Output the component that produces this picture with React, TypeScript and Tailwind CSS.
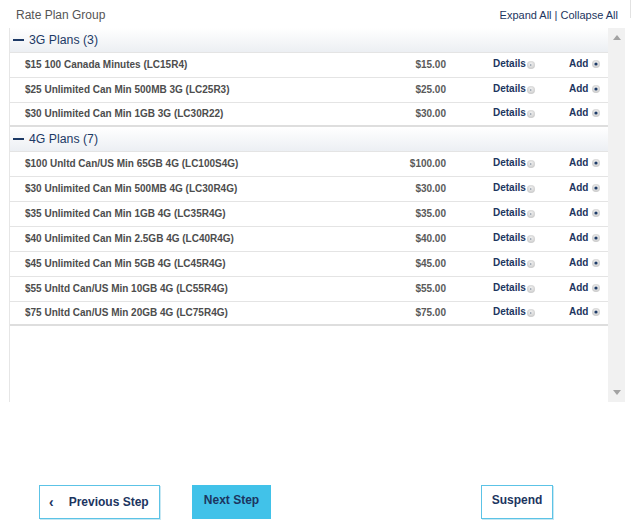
import React from "react";

const groups = [
  {
    title: "3G Plans (3)",
    plans: [
      ["$15 100 Canada Minutes (LC15R4)", "$15.00"],
      ["$25 Unlimited Can Min 500MB 3G (LC25R3)", "$25.00"],
      ["$30 Unlimited Can Min 1GB 3G (LC30R22)", "$30.00"],
    ],
  },
  {
    title: "4G Plans (7)",
    plans: [
      ["$100 Unltd Can/US Min 65GB 4G (LC100S4G)", "$100.00"],
      ["$30 Unlimited Can Min 500MB 4G (LC30R4G)", "$30.00"],
      ["$35 Unlimited Can Min 1GB 4G (LC35R4G)", "$35.00"],
      ["$40 Unlimited Can Min 2.5GB 4G (LC40R4G)", "$40.00"],
      ["$45 Unlimited Can Min 5GB 4G (LC45R4G)", "$45.00"],
      ["$55 Unltd Can/US Min 10GB 4G (LC55R4G)", "$55.00"],
      ["$75 Unltd Can/US Min 20GB 4G (LC75R4G)", "$75.00"],
    ],
  },
];

function DetailsIcon() {
  return (
    <svg width="8" height="8" viewBox="0 0 8 8" className="ml-[1px] mt-[2px]">
      <defs>
        <radialGradient id="dg" cx="50%" cy="40%" r="60%">
          <stop offset="0%" stopColor="#f4f4f4" />
          <stop offset="100%" stopColor="#c9c9c9" />
        </radialGradient>
      </defs>
      <circle cx="4" cy="4" r="4" fill="url(#dg)" />
      <path d="M3.3 3 L4.8 4 L3.3 5 Z" fill="#6b7a8c" />
    </svg>
  );
}

function AddIcon() {
  return (
    <svg width="8" height="8" viewBox="0 0 8 8" className="ml-[4px]">
      <defs>
        <radialGradient id="ag" cx="50%" cy="40%" r="60%">
          <stop offset="0%" stopColor="#f4f4f4" />
          <stop offset="100%" stopColor="#c9c9c9" />
        </radialGradient>
      </defs>
      <circle cx="4" cy="4" r="4" fill="url(#ag)" />
      <circle cx="4" cy="4" r="1.6" fill="#1d3a66" />
    </svg>
  );
}

export default function App() {
  return (
    <div
      className="w-[643px] h-[528px] bg-white text-[#555]"
      style={{ fontFamily: '"Liberation Sans", Arial, sans-serif' }}
    >
      <div className="flex h-[28px] items-start">
        <div className="pl-[16px] pt-[8px] text-[12px] leading-[14px] text-[#555] flex-1">
          Rate Plan Group
        </div>
        <div className="pt-[8px] text-[11px] leading-[14px] text-[#1c3560]">
          Expand All | Collapse All
        </div>
        <div className="ml-[12px] mr-[12px] h-[18px] w-px bg-[#e2e2e2]" />
      </div>

      <div className="ml-[9px] flex h-[374px] w-[616px] border-l border-[#e6e6e6]">
        <div className="flex-1">
          {groups.map((g) => (
            <div key={g.title}>
              <div className="flex h-[24px] items-center bg-gradient-to-b from-white to-[#eceff3] pl-[3px] text-[12.3px] text-[#1d3a66]">
                <span className="mr-[5px] inline-block h-[2px] w-[11px] bg-[#1d3a66]" />
                {g.title}
              </div>
              {g.plans.map(([name, price], i) => (
                <div
                  key={name}
                  className={
                    i === g.plans.length - 1
                      ? "flex h-[25px] items-center border-t border-b-2 border-t-[#e4e4e4] border-b-[#dedede] pl-[15px] text-[10px] font-bold"
                      : "flex h-[25px] items-center border-t border-[#e4e4e4] pl-[15px] text-[10px] font-bold"
                  }
                >
                  <div className="flex-1 pb-[1px] text-[#4d4d4d]">{name}</div>
                  <div className="w-[80px] pb-[1px] text-right text-[#5a5a5a]">{price}</div>
                  <div className="ml-[47px] flex w-[76px] items-center pb-[3px] text-[#1c3560]">
                    Details
                    <DetailsIcon />
                  </div>
                  <div className="flex w-[39px] items-center pb-[3px] text-[#1c3560]">
                    Add
                    <AddIcon />
                  </div>
                </div>
              ))}
            </div>
          ))}
        </div>
        <div className="flex w-[17px] flex-col items-center justify-between bg-[#f1f1f1] py-[7px]">
          <svg width="8" height="5" viewBox="0 0 8 5">
            <path d="M4 0 L8 5 L0 5 Z" fill="#a3a3a3" />
          </svg>
          <svg width="8" height="5" viewBox="0 0 8 5">
            <path d="M0 0 L8 0 L4 5 Z" fill="#a3a3a3" />
          </svg>
        </div>
      </div>

      <div className="mt-[83px] flex items-start">
        <button className="ml-[39px] flex h-[34px] w-[121px] items-center border border-[#5cc3e6] bg-white text-[12px] font-bold text-[#1c3560] shadow-[1px_1px_0_#c7e8f3]">
          <span className="ml-[9px] text-[14px] leading-none">‹</span>
          <span className="ml-[15px]">Previous Step</span>
        </button>
        <button className="ml-[32px] h-[34px] w-[79px] bg-[#41c2e9] pb-[4px] text-[12px] font-bold text-[#1c3560]">
          Next Step
        </button>
        <button className="ml-[210px] h-[34px] w-[72px] border border-[#5cc3e6] bg-white pb-[4px] text-[12px] font-bold text-[#1c3560] shadow-[1px_1px_0_#c7e8f3]">
          Suspend
        </button>
      </div>
    </div>
  );
}
